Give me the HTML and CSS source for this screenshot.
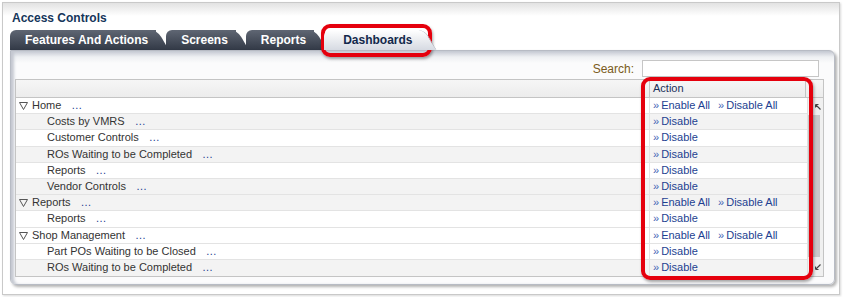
FILE: index.html
```html
<!DOCTYPE html>
<html lang="en">
<head>
  <meta charset="UTF-8">
  <title>Access Controls</title>
  <link rel="stylesheet" href="styles.css">
</head>
<body>
  <div class="frame">
    <div class="title">Access Controls</div>

    <div class="tabs">
      <div class="tab">Features And Actions</div>
      <div class="tab">Screens</div>
      <div class="tab">Reports</div>
      <div class="tab active">Dashboards</div>
    </div>

    <div class="panel">
      <div class="search">
        <span class="search-label">Search:</span>
        <span class="search-box"></span>
      </div>

      <div class="grid">
        <div class="grid-head">
          <div class="col-name"></div>
          <div class="col-action">Action</div>
        </div>
        <div class="grid-body">
          <div class="rows">
            <div class="row">
              <div class="col-name group"><svg class="twisty" width="9" height="8" viewBox="0 0 9 8"><polygon points="0.5,0.5 8.5,0.5 4.5,7.5" fill="none" stroke="#555" stroke-width="1"/></svg>Home<span class="more">…</span></div>
              <div class="col-action"><a>Enable All</a><a>Disable All</a></div>
            </div>
            <div class="row alt">
              <div class="col-name child">Costs by VMRS<span class="more">…</span></div>
              <div class="col-action"><a>Disable</a></div>
            </div>
            <div class="row">
              <div class="col-name child">Customer Controls<span class="more">…</span></div>
              <div class="col-action"><a>Disable</a></div>
            </div>
            <div class="row alt">
              <div class="col-name child">ROs Waiting to be Completed<span class="more">…</span></div>
              <div class="col-action"><a>Disable</a></div>
            </div>
            <div class="row">
              <div class="col-name child">Reports<span class="more">…</span></div>
              <div class="col-action"><a>Disable</a></div>
            </div>
            <div class="row alt">
              <div class="col-name child">Vendor Controls<span class="more">…</span></div>
              <div class="col-action"><a>Disable</a></div>
            </div>
            <div class="row alt">
              <div class="col-name group"><svg class="twisty" width="9" height="8" viewBox="0 0 9 8"><polygon points="0.5,0.5 8.5,0.5 4.5,7.5" fill="none" stroke="#555" stroke-width="1"/></svg>Reports<span class="more">…</span></div>
              <div class="col-action"><a>Enable All</a><a>Disable All</a></div>
            </div>
            <div class="row">
              <div class="col-name child">Reports<span class="more">…</span></div>
              <div class="col-action"><a>Disable</a></div>
            </div>
            <div class="row">
              <div class="col-name group"><svg class="twisty" width="9" height="8" viewBox="0 0 9 8"><polygon points="0.5,0.5 8.5,0.5 4.5,7.5" fill="none" stroke="#555" stroke-width="1"/></svg>Shop Management<span class="more">…</span></div>
              <div class="col-action"><a>Enable All</a><a>Disable All</a></div>
            </div>
            <div class="row">
              <div class="col-name child">Part POs Waiting to be Closed<span class="more">…</span></div>
              <div class="col-action"><a>Disable</a></div>
            </div>
            <div class="row alt last">
              <div class="col-name child">ROs Waiting to be Completed<span class="more">…</span></div>
              <div class="col-action"><a>Disable</a></div>
            </div>
          </div>

          <div class="scrollbar">
            <div class="sb-end">
              <svg width="6" height="6" viewBox="0 0 6 6"><path d="M0.5 0.5 L5.5 5.5 M0.5 0.5 L3.5 0.5 M0.5 0.5 L0.5 3.5" stroke="#444" stroke-width="1.2" fill="none"/></svg>
            </div>
            <div class="sb-thumb"></div>
            <div class="sb-end bottom">
              <svg width="6" height="6" viewBox="0 0 6 6"><path d="M5.5 0.5 L0.5 5.5 M0.5 5.5 L3.5 5.5 M0.5 5.5 L0.5 2.5" stroke="#444" stroke-width="1.2" fill="none"/></svg>
            </div>
          </div>
        </div>
      </div>
    </div>

    <!-- callout marks from the screenshot -->
    <div class="mark mark-tab"></div>
    <div class="mark mark-action"></div>
  </div>
</body>
</html>
```

FILE: styles.css
```css
body {
  margin: 0;
  background: #fff;
  font-family: "Liberation Sans", Arial, sans-serif;
  font-size: 11px;
  color: #333;
}

.frame {
  position: relative;
  margin: 2px;
  width: 836px;
  height: 291px;
  border: 1px solid #c9c9c9;
  background: linear-gradient(#e2e2e2, #fff 13px);
  box-shadow: 1px 1px 2px rgba(0, 0, 0, 0.15);
}

.title {
  padding: 8px 0 0 9px;
  height: 14px;
  line-height: 14px;
  font-size: 12px;
  font-weight: bold;
  color: #15355a;
}

/* tabs */
.tabs {
  display: flex;
  margin: 5px 0 0 7px;
  height: 20px;
}

.tab {
  position: relative;
  height: 20px;
  line-height: 21px;
  padding: 0 8px 0 15px;
  margin-right: 10px;
  border-top-left-radius: 6px;
  background: linear-gradient(#5f6673, #323946);
  color: #fff;
  font-size: 12px;
  font-weight: bold;
}

.tab::after {
  content: "";
  position: absolute;
  top: 0;
  right: -7px;
  width: 14px;
  height: 20px;
  background: inherit;
  border-top-right-radius: 7px;
  transform: skewX(30deg);
}

.tab.active {
  padding: 0 8px 0 19px;
  background: linear-gradient(#ffffff, #d6dae2);
  color: #13294b;
  z-index: 1;
}

.tab.active::after {
  right: -10px;
  width: 18px;
  border-right: 1px solid #b5b9c2;
}

/* panel */
.panel {
  position: relative;
  margin-left: 7px;
  width: 809px;
  padding: 7px 10px 7px 4px;
  border: 1px solid #b7bbc4;
  border-radius: 0 6px 6px 6px;
  background: linear-gradient(#c4c8d1, #eef0f3 6px, #fbfbfc 12px);
  box-shadow: inset 4px 0 3px -1px #c4c8d1, 2px 2px 3px rgba(0, 0, 0, 0.3);
}

.search {
  display: flex;
  justify-content: flex-end;
  align-items: center;
  height: 21px;
  padding-right: 5px;
}

.search-label {
  margin-right: 8px;
  color: #7a5a20;
  font-size: 12px;
}

.search-box {
  width: 175px;
  height: 15px;
  border: 1px solid #c6c6c6;
  background: #fff;
}

/* grid */
.grid {
  border: 1px solid #c4c4c4;
  background: #fff;
}

.grid-head {
  display: flex;
  height: 17px;
  line-height: 17px;
  border-bottom: 1px solid #c4c4c4;
  background: linear-gradient(#f6f6f6, #ececec);
}

.grid-head .col-action {
  width: 152px;
  padding-left: 3px;
  border-left: 1px solid #c4c4c4;
  border-right: 1px solid #c4c4c4;
  color: #1a2f5a;
}

.col-name {
  width: 633px;
  flex: none;
  box-sizing: border-box;
}

.grid-body {
  display: flex;
}

.rows {
  flex: 1;
}

.row {
  display: flex;
  height: 16.2px;
  line-height: 15px;
  border-bottom: 1px solid #e3e3e3;
  box-sizing: border-box;
  background: #fff;
}

.row.alt {
  background: #f3f3f3;
}

.row.last {
  border-bottom: none;
}

.row .col-action {
  flex: 1;
  padding-left: 3px;
  border-left: 1px solid #e3e3e3;
}

.group {
  padding-left: 3px;
}

.child {
  padding-left: 31px;
}

.group .twisty {
  margin-right: 4px;
  vertical-align: -1px;
}

.more {
  margin-left: 10px;
  color: #1d3f91;
}

.col-action a {
  margin-right: 8px;
  color: #1d3f91;
}

.col-action a::before {
  content: "»";
  margin-right: 2px;
  color: #3f63b5;
}

/* scrollbar */
.scrollbar {
  width: 15px;
  display: flex;
  flex-direction: column;
  background: #f0f0f0;
  border-left: 1px solid #e0e0e0;
}

.sb-end {
  height: 17px;
  display: flex;
  align-items: center;
  justify-content: center;
  padding-left: 4px;
}

.sb-end.bottom {
  height: 19px;
}

.sb-thumb {
  flex: 1;
  margin-right: 3px;
  background: #c9c9c9;
}

/* red callouts */
.mark {
  position: absolute;
  border: 4px solid #e5000d;
  border-radius: 9px;
  box-shadow: 1px 2px 3px rgba(0, 0, 0, 0.35);
}

.mark-tab {
  left: 318px;
  top: 21px;
  width: 103px;
  height: 25px;
}

.mark-action {
  left: 638px;
  top: 74px;
  width: 164px;
  height: 195px;
}
```
